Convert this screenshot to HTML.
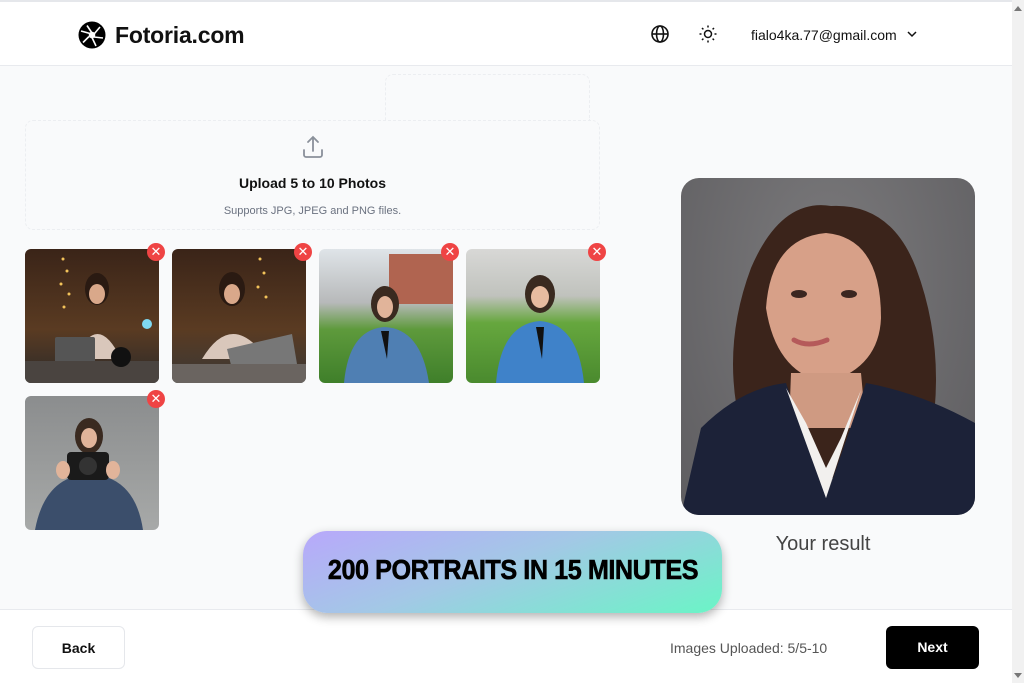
<!DOCTYPE html>
<html><head><meta charset="utf-8">
<style>
*{margin:0;padding:0;box-sizing:border-box}
html{width:1024px;height:683px;overflow:hidden}
body{width:1024px;height:683px;overflow:hidden;background:#f9fafb;font-family:"Liberation Sans",sans-serif;position:relative;color:#111}
.hdr{position:absolute;left:0;top:0;width:1012px;height:66px;background:#fff;border-top:2px solid #e5e7eb;border-bottom:1px solid #e8eaee}
.logo{position:absolute;left:78px;top:19px;display:flex;align-items:center}
.logo span{font-weight:bold;font-size:23px;margin-left:9px;letter-spacing:-0.2px}
.email{position:absolute;left:751px;top:25px;font-size:14px}
.sb{position:absolute;left:1012px;top:0;width:12px;height:683px;background:#f1f1f1}
.thumb{position:absolute;left:1014px;top:140px;width:8px;height:526px;background:#c1c1c1;border-radius:4px}
.up{position:absolute;left:25px;top:120px;width:575px;height:110px;border:1px dashed #eceef1;border-radius:8px;text-align:center}
.up2{position:absolute;left:385px;top:74px;width:205px;height:46px;border:1px dashed #eceef1;border-bottom:none;border-radius:8px 8px 0 0}
.ph{position:absolute;width:134px;height:134px;border-radius:6px;overflow:hidden}
.x{position:absolute;width:18px;height:18px;border-radius:50%;background:#ef4444;color:#fff;font-size:13px;line-height:18px;text-align:center}
.res{position:absolute;left:681px;top:178px;width:294px;height:337px;border-radius:18px;overflow:hidden}
.foot{position:absolute;left:0;top:609px;width:1012px;height:74px;background:#fff;border-top:1px solid #e8eaee}
.btn{position:absolute;top:626px;width:93px;height:43px;border-radius:6px;font-size:14px;font-weight:bold;text-align:center;line-height:43px}
.banner{position:absolute;left:303px;top:531px;width:419px;height:82px;border-radius:24px;background:linear-gradient(160deg,#b8a8fb 0%,#a3c8e6 45%,#6af5c6 100%);box-shadow:0 4px 10px rgba(0,0,0,.3);overflow:hidden}
.banner span{position:absolute;left:50%;top:23px;white-space:nowrap;font-weight:bold;font-size:28px;letter-spacing:-0.5px;color:#000;transform:translateX(-50%) scaleX(0.9);-webkit-text-stroke:0.6px #000}
</style></head><body>
<div class="hdr">
 <div class="logo">
  <svg width="28" height="28" viewBox="0 0 28 28"><circle cx="14" cy="14" r="13.5" fill="#000"/>
   <g stroke="#fff" stroke-width="1.6" fill="none"><path d="M9 4.5 L14 12"/><path d="M22 6 L16.5 12.5"/><path d="M25 17 L16 16"/><path d="M18 25 L14 16.5"/><path d="M5 21.5 L11 15.5"/><path d="M3 10 L12 12.5"/></g>
   <circle cx="14" cy="14" r="3.3" fill="#fff"/></svg>
  <span>Fotoria.com</span>
 </div>
 <svg style="position:absolute;left:650px;top:22px" width="20" height="20" viewBox="0 0 20 20" fill="none" stroke="#111" stroke-width="1.6"><circle cx="10" cy="10" r="8"/><ellipse cx="10" cy="10" rx="3.5" ry="8"/><path d="M2 10h16"/></svg>
 <svg style="position:absolute;left:698px;top:22px" width="20" height="20" viewBox="0 0 20 20" fill="none" stroke="#111" stroke-width="1.5"><circle cx="10" cy="10" r="3.5"/><path d="M10 1.5v2M10 16.5v2M1.5 10h2M16.5 10h2M4 4l1.4 1.4M14.6 14.6L16 16M4 16l1.4-1.4M14.6 5.4L16 4"/></svg>
 <div class="email">fialo4ka.77@gmail.com</div>
 <svg style="position:absolute;left:906px;top:27px" width="12" height="10" viewBox="0 0 12 10" fill="none" stroke="#111" stroke-width="1.5"><path d="M2 3l4 4 4-4"/></svg>
</div>
<div class="sb"><div style="position:absolute;left:2px;top:6px;border:4px solid transparent;border-bottom:5px solid #777;border-top:none"></div><div class="thumb"></div><div style="position:absolute;left:2px;top:673px;border:4px solid transparent;border-top:5px solid #777;border-bottom:none"></div></div>
<div class="up2"></div>
<div class="up">
 <svg style="position:absolute;left:276px;top:14px" width="22" height="24" viewBox="0 0 22 24" fill="none" stroke="#8a909a" stroke-width="1.8" stroke-linecap="round"><path d="M11 16V2M6 7l5-5 5 5"/><path d="M2 15v5a2 2 0 0 0 2 2h14a2 2 0 0 0 2-2v-5"/></svg>
 <div style="position:absolute;left:0;width:100%;top:54px;font-size:14px;font-weight:bold">Upload 5 to 10 Photos</div>
 <div style="position:absolute;left:0;width:100%;top:84px;font-size:11px;color:#6b7280">Supports JPG, JPEG and PNG files.</div>
</div>

<div class="ph" style="left:25px;top:249px;background:linear-gradient(#3a2418,#5a3b22 60%,#2b2a2a)">
 <svg width="134" height="134"><g fill="#f3c35a"><circle cx="38" cy="10" r="1.5"/><circle cx="42" cy="22" r="1.5"/><circle cx="36" cy="35" r="1.5"/><circle cx="44" cy="45" r="1.5"/><circle cx="39" cy="58" r="1.5"/></g><ellipse cx="72" cy="40" rx="12" ry="16" fill="#2a1a12"/><ellipse cx="72" cy="45" rx="8" ry="10" fill="#d9a88a"/><path d="M50 110 Q72 60 96 110Z" fill="#d9c7bb"/><rect x="30" y="88" width="40" height="30" fill="#555" rx="2"/><rect x="0" y="112" width="134" height="22" fill="#4a4440"/><circle cx="96" cy="108" r="10" fill="#111"/><circle cx="122" cy="75" r="5" fill="#7fd9f2"/></svg>
</div>
<div class="ph" style="left:172px;top:249px;background:linear-gradient(#3a2418,#5a3b22 60%,#3a3836)">
 <svg width="134" height="134"><g fill="#f3c35a"><circle cx="88" cy="10" r="1.5"/><circle cx="92" cy="24" r="1.5"/><circle cx="86" cy="38" r="1.5"/><circle cx="94" cy="48" r="1.5"/></g><ellipse cx="60" cy="40" rx="13" ry="17" fill="#2a1a12"/><ellipse cx="60" cy="45" rx="8" ry="10" fill="#d9a88a"/><path d="M30 110 Q60 60 95 110Z" fill="#d9c7bb"/><path d="M55 100 L120 85 L125 115 L60 120Z" fill="#777"/><rect x="0" y="115" width="134" height="19" fill="#6a6460"/></svg>
</div>
<div class="ph" style="left:319px;top:249px;background:linear-gradient(#dfe4e8,#b7b9ba 40%,#5e9a3c 60%,#3f7f2a)">
 <svg width="134" height="134"><rect x="70" y="5" width="64" height="50" fill="#b06450"/><ellipse cx="66" cy="55" rx="14" ry="18" fill="#3a2a20"/><ellipse cx="66" cy="58" rx="8" ry="11" fill="#e1b49a"/><path d="M25 134 Q30 80 66 78 Q102 80 110 134Z" fill="#4f7fb3"/><path d="M62 82 L70 82 L68 110Z" fill="#111"/></svg>
</div>
<div class="ph" style="left:466px;top:249px;background:linear-gradient(#d8d8d6,#c0c2bd 35%,#66a73e 55%,#4a8a2e)">
 <svg width="134" height="134"><ellipse cx="74" cy="45" rx="15" ry="19" fill="#3a2a20"/><ellipse cx="74" cy="48" rx="9" ry="11" fill="#e8bca0"/><path d="M30 134 Q35 75 74 72 Q112 75 118 134Z" fill="#3f82c9"/><path d="M70 78 L78 78 L76 110Z" fill="#111"/></svg>
</div>
<div class="ph" style="left:25px;top:396px;background:linear-gradient(#8b8d8e,#a7a9a8)">
 <svg width="134" height="134"><ellipse cx="64" cy="40" rx="14" ry="18" fill="#3a2a20"/><ellipse cx="64" cy="42" rx="8" ry="10" fill="#e1b49a"/><path d="M10 134 Q20 80 64 78 Q110 80 118 134Z" fill="#3b4e6b"/><rect x="42" y="56" width="42" height="28" rx="4" fill="#1a1a1a"/><circle cx="63" cy="70" r="9" fill="#333"/><ellipse cx="38" cy="74" rx="7" ry="9" fill="#e1b49a"/><ellipse cx="88" cy="74" rx="7" ry="9" fill="#e1b49a"/></svg>
</div>
<div class="x" style="left:147px;top:243px">✕</div>
<div class="x" style="left:294px;top:243px">✕</div>
<div class="x" style="left:441px;top:243px">✕</div>
<div class="x" style="left:588px;top:243px">✕</div>
<div class="x" style="left:147px;top:390px">✕</div>

<div class="res" style="background:radial-gradient(ellipse at 50% 30%,#7b7a7c,#5e5d60)">
 <svg width="294" height="337" viewBox="0 0 294 337">
  <path d="M60 250 Q40 170 70 90 Q100 20 150 28 Q210 25 235 90 Q265 170 250 260 L230 300 L70 300Z" fill="#3b241b"/>
  <path d="M85 130 Q90 60 145 55 Q200 60 200 140 Q198 190 145 205 Q95 195 85 130Z" fill="#d7a088"/>
  <ellipse cx="118" cy="116" rx="8" ry="4" fill="#3a2620"/><ellipse cx="168" cy="116" rx="8" ry="4" fill="#3a2620"/>
  <path d="M113 162 Q127 170 146 162" stroke="#b55a5a" stroke-width="5" fill="none" stroke-linecap="round"/>
  <path d="M110 195 L180 195 L185 250 L108 250Z" fill="#cf9a82"/>
  <path d="M0 337 L20 250 Q60 210 105 205 L145 320 L185 205 Q240 215 294 245 L294 337Z" fill="#1c2238"/>
  <path d="M105 210 L145 320 L180 212 L160 260 L145 290 L125 245Z" fill="#f2f0ee"/>
 </svg>
</div>
<div style="position:absolute;left:681px;width:284px;text-align:center;top:533px;font-size:20px;color:#444">Your result</div>

<div class="foot"></div>
<div class="btn" style="left:32px;background:#fff;border:1px solid #e5e7eb;color:#111">Back</div>
<div style="position:absolute;left:670px;top:640px;font-size:14px;color:#555">Images Uploaded: 5/5-10</div>
<div class="btn" style="left:886px;background:#000;color:#fff">Next</div>
<div class="banner"><span>200 PORTRAITS IN 15 MINUTES</span></div>
</body></html>
